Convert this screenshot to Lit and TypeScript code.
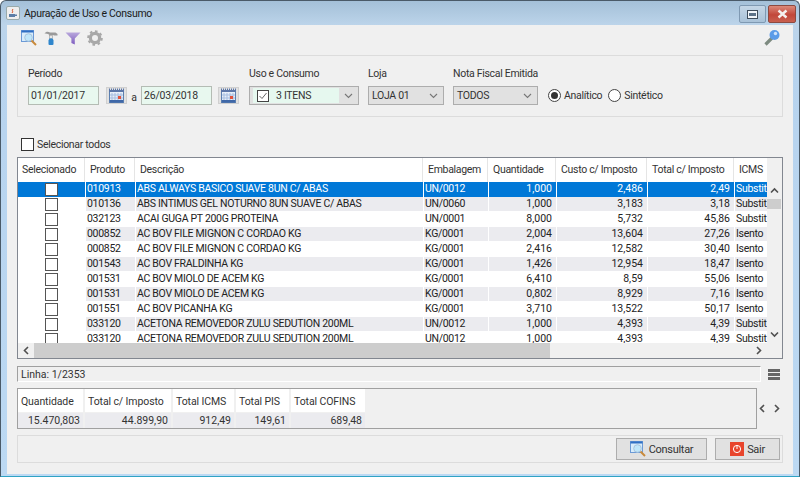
import { LitElement, html, css, svg } from "lit";
import { customElement } from "lit/decorators.js";

const COLS = [
  { label: "Selecionado" },
  { label: "Produto" },
  { label: "Descrição" },
  { label: "Embalagem" },
  { label: "Quantidade" },
  { label: "Custo c/ Imposto" },
  { label: "Total c/ Imposto" },
  { label: "ICMS" },
];

const ROWS = [
  ["010913", "ABS ALWAYS BASICO SUAVE 8UN C/ ABAS", "UN/0012", "1,000", "2,486", "2,49", "Substit"],
  ["010136", "ABS INTIMUS GEL NOTURNO 8UN SUAVE C/ ABAS", "UN/0060", "1,000", "3,183", "3,18", "Substit"],
  ["032123", "ACAI GUGA PT 200G PROTEINA", "UN/0001", "8,000", "5,732", "45,86", "Substit"],
  ["000852", "AC BOV FILE MIGNON C CORDAO KG", "KG/0001", "2,004", "13,604", "27,26", "Isento"],
  ["000852", "AC BOV FILE MIGNON C CORDAO KG", "KG/0001", "2,416", "12,582", "30,40", "Isento"],
  ["001543", "AC BOV FRALDINHA KG", "KG/0001", "1,426", "12,954", "18,47", "Isento"],
  ["001531", "AC BOV MIOLO DE ACEM KG", "KG/0001", "6,410", "8,59", "55,06", "Isento"],
  ["001531", "AC BOV MIOLO DE ACEM KG", "KG/0001", "0,802", "8,929", "7,16", "Isento"],
  ["001551", "AC BOV PICANHA KG", "KG/0001", "3,710", "13,522", "50,17", "Isento"],
  ["033120", "ACETONA REMOVEDOR ZULU SEDUTION 200ML", "UN/0012", "1,000", "4,393", "4,39", "Substit"],
  ["033120", "ACETONA REMOVEDOR ZULU SEDUTION 200ML", "UN/0012", "1,000", "4,393", "4,39", "Substit"],
];

const TOTALS = [
  ["Quantidade", "15.470,803", 65],
  ["Total c/ Imposto", "44.899,90", 86],
  ["Total ICMS", "912,49", 61],
  ["Total PIS", "149,61", 53],
  ["Total COFINS", "689,48", 74],
];

const lens = (s: number) => html`<svg width=${s} height=${s} viewBox="0 0 16 16">
  <rect x="0.5" y="0.5" width="12" height="11" fill="#d8ecfb" stroke="#6c9ad6"/>
  <rect x="0.5" y="0.5" width="12" height="2" fill="#2f6fc4"/>
  <circle cx="7.5" cy="7.5" r="3.8" fill="#bfe6fa" stroke="#a8c4dc"/>
  <path d="M10.5 10.5l4.5 4.5" stroke="#c98a3a" stroke-width="2"/>
</svg>`;

const calendar = html`<svg width="17" height="15" viewBox="0 0 17 15">
  <rect x="1.5" y="2.5" width="14" height="12" fill="#e6eef8" stroke="#5b7fb0"/>
  <path d="M1 1.5h15" stroke="#5b76a8" stroke-width="2" stroke-dasharray="1 1"/>
  <rect x="1" y="2" width="15" height="2" fill="#5b76a8"/>
  ${[4, 7, 10, 13].map((x) => svg`<path d="M${x} 5v9" stroke="#a5bde0"/>`)}
  ${[7, 10].map((y) => svg`<path d="M2 ${y}h13" stroke="#a5bde0"/>`)}
  <rect x="10" y="8" width="3" height="3" fill="#e0533d"/>
  <rect x="2" y="12" width="13" height="2.5" fill="#3f68a8"/>
</svg>`;

const chevron = html`<svg width="9" height="6" viewBox="0 0 9 6"><path d="M1 1l3.5 3.5L8 1" fill="none" stroke="#777" stroke-width="1.1"/></svg>`;

const arrow = (d: string) => html`<svg width="9" height="9" viewBox="0 0 9 9"><path d=${d} fill="none" stroke="#505050" stroke-width="1.6"/></svg>`;
const ARROW_UP = "M1 6.5l3.5-3.5L8 6.5";
const ARROW_DOWN = "M1 2.5l3.5 3.5L8 2.5";
const ARROW_LEFT = "M6 1L2.5 4.5 6 8";
const ARROW_RIGHT = "M3 1l3.5 3.5L3 8";

@customElement("app-root")
export class AppRoot extends LitElement {
  static styles = css`
    :host {
      display: block;
      width: 800px;
      height: 477px;
      overflow: hidden;
      font-family: Roboto, "Noto Sans", sans-serif;
      font-size: 10.5px;
      letter-spacing: -0.3px;
      color: #333;
    }
    .window {
      box-sizing: border-box;
      width: 800px;
      height: 477px;
      display: flex;
      flex-direction: column;
      padding: 0 6px 2px 6px;
      border: 1px solid #4a5a68;
      border-bottom-color: #2fa3c4;
      border-radius: 6px 6px 0 0;
      background: linear-gradient(180deg, #a4c0d8 0, #bcd4ea 24px, #b7d3ee 60px, #bcd9f3 100%);
    }
    .title {
      height: 24px;
      flex: none;
      display: flex;
      align-items: center;
      gap: 4px;
      font-size: 10.5px;
      color: #1a1a1a;
      margin-left: -1px;
    }
    .title .grow { flex: 1; }
    .java { width: 14px; height: 14px; background: #eee; border: 1px solid #9aa; border-radius: 2px; box-sizing: border-box; display: flex; align-items: center; justify-content: center; }
    .winbtns { display: flex; align-self: flex-start; gap: 2px; margin: 4px -3px 0 0; }
    .wbtn { width: 27px; height: 18px; box-sizing: border-box; display: flex; align-items: center; justify-content: center; border: 1px solid #7f99b2; border-radius: 2px; background: linear-gradient(180deg, #c4d6e6, #a9c2d8); }
    .wbtn.close { width: 28px; border-color: #8d4a40; background: linear-gradient(180deg, #dc8a7a, #c2473a 55%, #c8604f); }
    .body {
      flex: 1;
      background: #f0f0f0;
      display: flex;
      flex-direction: column;
      padding: 0 10px;
      min-height: 0;
    }
    .toolbar { height: 25px; flex: none; display: flex; align-items: center; gap: 6px; padding-left: 4px; }
    .toolbar .grow { flex: 1; }
    .filters {
      box-sizing: border-box;
      height: 62px;
      margin-top: 5px;
      flex: none;
      border: 1px solid #dcdcdc;
      display: flex;
      align-items: flex-start;
      padding: 11px 0 0 10px;
    }
    .fld { display: flex; flex-direction: column; gap: 5px; }
    .fld label { height: 14px; line-height: 14px; white-space: nowrap; }
    .row { display: flex; align-items: center; height: 19px; }
    .date { box-sizing: border-box; width: 71px; height: 19px; border: 1px solid #b4bcb4; background: #e8f8ef; padding-left: 2px; line-height: 17px; letter-spacing: -0.2px; }
    .cal { box-sizing: border-box; width: 21px; height: 17px; background: #e1e1e1; border: 1px solid #d0d0d0; display: flex; align-items: center; justify-content: center; }
    .sep-a { width: 14px; text-align: center; padding-top: 3px; }
    .sel { box-sizing: border-box; height: 19px; border: 1px solid #adadad; background: #e1e1e1; display: flex; align-items: center; padding: 0 0 0 3px; }
    .sel .txt { flex: 1; line-height: 17px; }
    .sel .ch { width: 19px; display: flex; justify-content: center; }
    .multi { width: 110px; }
    .multi .txt { background: #e6f8ef; display: flex; align-items: center; gap: 7px; height: 15px; padding-left: 4px; }
    .box { box-sizing: border-box; display: block; width: 13px; height: 13px; border: 1px solid #333; background: #fff; flex: none; }
    .tick { width: 12px; height: 12px; display: flex; }
    .radio { box-sizing: border-box; width: 13px; height: 13px; border: 1px solid #444; border-radius: 50%; background: #fff; display: flex; align-items: center; justify-content: center; }
    .radio.on::after { content: ""; width: 7px; height: 7px; border-radius: 50%; background: #333; }
    .radios { display: flex; align-items: center; gap: 3px; height: 19px; margin-top: 19px; margin-left: 10px; }
    .radios span.l { margin-right: 3px; }
    .all { display: flex; align-items: center; gap: 3px; height: 16px; margin: 19px 0 0 4px; flex: none; }
    .table {
      box-sizing: border-box;
      height: 202px;
      margin-top: 5px;
      flex: none;
      border: 1px solid #828790;
      background: #fff;
      overflow: hidden;
      display: grid;
      grid-template-columns: 749px 16px;
      grid-template-rows: 1fr 15px;
    }
    .view { overflow: hidden; min-width: 0; grid-column: 1; grid-row: 1; }
    .trow { display: grid; grid-template-columns: 67px 50px 288px 65px 68px 91px 87px 33px; height: 15px; line-height: 14px; }
    .trow.head { height: 24px; line-height: 24px; background: #fff; }
    .head > div { border-right: 1px solid #e5e5e5; padding: 0 0 0 5px; white-space: nowrap; box-sizing: border-box; overflow: hidden; }
    .head > div:first-child { padding-left: 4px; }
    .head > div:last-child { border-right: 0; }
    .cell { padding: 0 1px; white-space: nowrap; overflow: hidden; border-left: 1px solid #fff; box-sizing: border-box; color: #222; }
    .num { text-align: right; padding-right: 4px; letter-spacing: 0; }
    .gray .cell { background: #ebebef; border-bottom: 1px solid #fff; }
    .check { display: flex; align-items: center; justify-content: center; background: #fff !important; border: 0 !important; }
    .check .box { border-color: #555; }
    .active .cell { background: #0078d7 !important; color: #fff; }
    .vbar { grid-column: 2; grid-row: 1 / 3; background: #f0f0f0; display: flex; flex-direction: column; align-items: center; padding: 28px 2px 0 0; }
    .vbar .thumb { width: 14px; height: 10px; background: #cdcdcd; margin-top: 4px; }
    .vbar .grow { flex: 1; }
    .vbar .down { padding-bottom: 19px; line-height: 0; }
    .hbar { grid-column: 1; grid-row: 2; background: #f0f0f0; display: flex; align-items: center; padding: 0 4px; }
    .hbar .thumb { height: 15px; width: 516px; background: #cdcdcd; margin: 0 0 0 3px; }
    .hbar .grow { flex: 1; }
    .status { display: flex; align-items: center; height: 16px; margin-top: 7px; flex: none; }
    .linha { box-sizing: border-box; width: 744px; height: 16px; border: 1px solid #a0a0a0; border-right-color: #fff; border-bottom-color: #fff; line-height: 16px; padding-left: 3px; letter-spacing: 0; }
    .menu { margin-left: 7px; display: flex; flex-direction: column; gap: 1px; }
    .menu i { display: block; width: 12px; height: 3px; background: #666; }
    .sumrow { display: flex; margin-top: 6px; height: 41px; flex: none; }
    .totals { box-sizing: border-box; width: 740px; border: 1px solid #a0a0a0; padding: 0; display: flex; }
    .tcol { display: flex; flex-direction: column; margin-right: 2px; box-sizing: border-box; }
    .tcol .h { height: 23px; line-height: 25px; background: #fff; padding: 0 3px; white-space: nowrap; letter-spacing: -0.1px; }
    .tcol .v { height: 15px; line-height: 15px; background: #ebebef; text-align: right; padding: 0 3px; margin-top: 1px; letter-spacing: 0; }
    .pager { display: flex; align-items: center; gap: 5px; padding-left: 1px; }
    .pager svg { display: block; }
    .footer {
      box-sizing: border-box;
      height: 28px;
      margin-top: 6px;
      flex: none;
      border: 1px solid #dcdcdc;
      display: flex;
      justify-content: flex-end;
      align-items: center;
      gap: 8px;
      padding-right: 2px;
    }
    .btn { box-sizing: border-box; height: 22px; background: #e1e1e1; border: 1px solid #adadad; display: flex; align-items: center; justify-content: center; gap: 3px; font-size: 11px; }
    .power { width: 14px; height: 14px; background: #e8452c; display: flex; align-items: center; justify-content: center; }
  `;

  render() {
    return html`<div class="window">
      <div class="title">
        <span class="java"><svg width="10" height="11" viewBox="0 0 10 11"><path d="M1 6h6v3H1zM7 6.5h2v1.5H7" fill="#5c7da6"/><path d="M5 1C3 3 6 3 4 5" stroke="#d8562c" fill="none"/></svg></span>
        <span>Apuração de Uso e Consumo</span>
        <span class="grow"></span>
        <span class="winbtns">
          <span class="wbtn"><svg width="11" height="9" viewBox="0 0 11 9"><rect x="0.5" y="0.5" width="10" height="8" fill="#f2f6fa" stroke="#3e4c5a"/><rect x="2" y="3" width="7" height="3" fill="#5c7288"/></svg></span>
          <span class="wbtn close"><svg width="13" height="10" viewBox="0 0 13 10"><path d="M2.5 1.5l8 7M10.5 1.5l-8 7" stroke="#f5f0ee" stroke-width="2.4"/></svg></span>
        </span>
      </div>
      <div class="body">
        <div class="toolbar">
          ${lens(16)}
          <svg width="16" height="16" viewBox="0 0 16 16">
            <path d="M1.5 3.5C3 1.5 5 1.5 7 2.5h5.5l2 1.5v1.5H11l-1-.5H6.5L5 4C4 3.6 3 3.4 1.5 3.5z" fill="#9a9a9a"/>
            <rect x="6.5" y="5.5" width="3" height="3" fill="#e8e8e8" stroke="#9a9a9a" stroke-width=".6"/>
            <path d="M6.3 8.5h3.4l.8 2v3.5a1 1 0 0 1-1 1H6.5a1 1 0 0 1-1-1v-3.5z" fill="#2f86cc"/>
          </svg>
          <svg width="16" height="16" viewBox="0 0 16 16"><defs><linearGradient id="fn" x1="0" y1="0" x2="0" y2="1"><stop offset="0" stop-color="#b9a8dc"/><stop offset="1" stop-color="#7d5cc0"/></linearGradient></defs><path d="M0.5 2.5h15L9.8 8.5v6l-3.4-1.5V8.5z" fill="url(#fn)"/></svg>
          <svg width="16" height="16" viewBox="0 0 16 16"><circle cx="8" cy="8" r="4.6" fill="none" stroke="#a8a8a8" stroke-width="3.2"/><circle cx="8" cy="8" r="6.8" fill="none" stroke="#a8a8a8" stroke-width="2" stroke-dasharray="2.6 2.7"/></svg>
          <span class="grow"></span>
          <svg width="18" height="18" viewBox="0 0 18 18" style="margin-right:2px"><path d="M9 9L2.5 15.5" stroke="#7d8a80" stroke-width="3.2"/><circle cx="11.5" cy="6" r="5" fill="#5b9be8"/><circle cx="12.5" cy="4.5" r="1.7" fill="#cfe3fb"/></svg>
        </div>
        <div class="filters">
          <div class="fld"><label>Período</label>
            <div class="row">
              <span class="date">01/01/2017</span>
              <span class="cal" style="margin-left:7px">${calendar}</span>
              <span class="sep-a">a</span>
              <span class="date">26/03/2018</span>
              <span class="cal" style="margin-left:6px">${calendar}</span>
            </div>
          </div>
          <div class="fld" style="margin-left:10px"><label>Uso e Consumo</label>
            <div class="sel multi"><span class="txt"><span class="tick"><svg width="12" height="12" viewBox="0 0 12 12"><rect x="0.5" y="0.5" width="11" height="11" fill="#fff" stroke="#444"/><path d="M2.5 6l2.5 2.5L9.5 3" fill="none" stroke="#666"/></svg></span>3 ITENS</span><span class="ch">${chevron}</span></div>
          </div>
          <div class="fld" style="margin-left:9px"><label>Loja</label>
            <div class="sel" style="width:76px"><span class="txt">LOJA 01</span><span class="ch">${chevron}</span></div>
          </div>
          <div class="fld" style="margin-left:9px;width:85px"><label>Nota Fiscal Emitida</label>
            <div class="sel" style="width:85px"><span class="txt">TODOS</span><span class="ch">${chevron}</span></div>
          </div>
          <div class="radios">
            <span class="radio on"></span><span class="l">Analítico</span>
            <span class="radio"></span><span class="l">Sintético</span>
          </div>
        </div>
        <div class="all"><span class="box"></span>Selecionar todos</div>
        <div class="table">
          <div class="view">
            <div class="trow head">${COLS.map((c) => html`<div>${c.label}</div>`)}</div>
            ${ROWS.map((r, i) => html`<div class="trow ${i === 0 ? "active" : ""} ${i % 2 ? "gray" : ""}">
              <div class="cell check"><span class="box"></span></div>
              ${r.map((v, j) => html`<div class="cell ${j >= 3 && j <= 5 ? "num" : ""}">${v}</div>`)}
            </div>`)}
          </div>
          <div class="vbar">
            ${arrow(ARROW_UP)}
            <span class="thumb"></span>
            <span class="grow"></span>
            <span class="down">${arrow(ARROW_DOWN)}</span>
          </div>
          <div class="hbar">${arrow(ARROW_LEFT)}<span class="thumb"></span><span class="grow"></span>${arrow(ARROW_RIGHT)}</div>
        </div>
        <div class="status">
          <div class="linha">Linha: 1/2353</div>
          <div class="menu"><i></i><i></i><i></i></div>
        </div>
        <div class="sumrow">
          <div class="totals">
            ${TOTALS.map(([h, v, w]) => html`<div class="tcol" style="width:${w}px"><div class="h">${h}</div><div class="v">${v}</div></div>`)}
          </div>
          <div class="pager">${arrow(ARROW_LEFT)}${arrow(ARROW_RIGHT)}</div>
        </div>
        <div class="footer">
          <div class="btn" style="width:91px">${lens(16)}<span>Consultar</span></div>
          <div class="btn" style="width:65px"><span class="power"><svg width="10" height="10" viewBox="0 0 10 10"><circle cx="5" cy="5" r="3.6" fill="none" stroke="#fff"/><path d="M5 1v4" stroke="#fff"/></svg></span><span>Sair</span></div>
        </div>
      </div>
    </div>`;
  }
}
